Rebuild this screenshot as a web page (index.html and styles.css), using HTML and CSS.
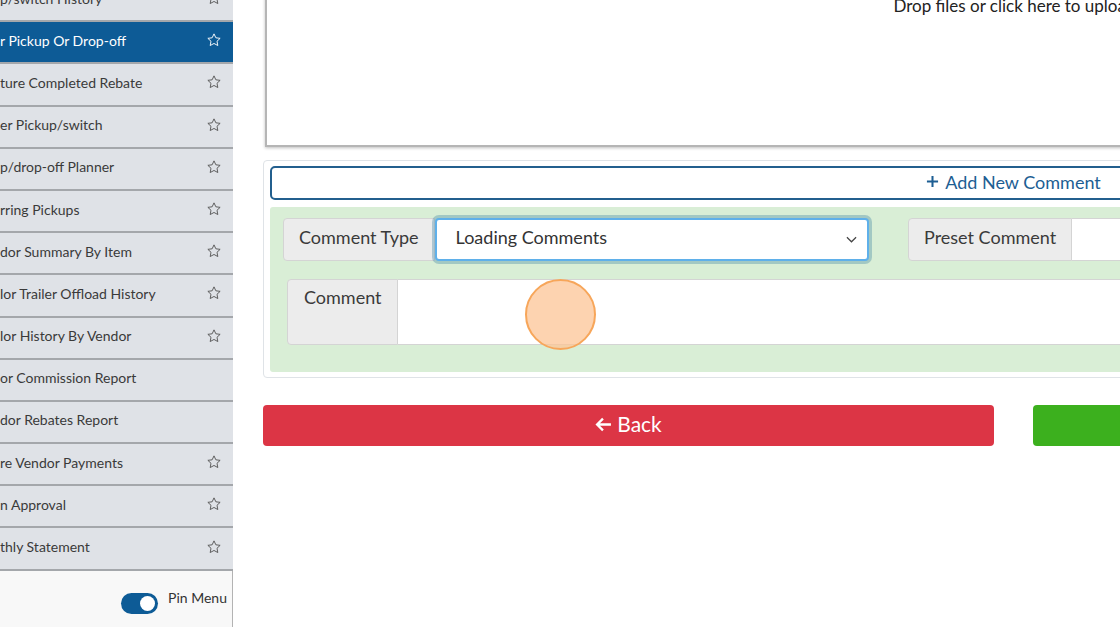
FILE: index.html
```html
<!DOCTYPE html>
<html lang="en">
<head>
    <meta charset="UTF-8">
    <meta name="viewport" content="width=device-width, initial-scale=1.0">
    <title>Vendor Pickup Or Drop-off</title>
    <link rel="stylesheet" href="styles.css">
</head>
<body>

<div class="layout">

    <!-- Side menu (scrolled, left part cut off) -->
    <aside class="sidebar">
        <ul class="menu">
            <li class="menu-item"><span>p/switch History</span><svg class="star" viewBox="0 0 24 24"><path d="M12 2.8l2.8 5.9 6.4.8-4.7 4.4 1.2 6.4L12 17.2l-5.7 3.1 1.2-6.4-4.7-4.4 6.4-.8z"/></svg></li>
            <li class="menu-item active"><span>r Pickup Or Drop-off</span><svg class="star" viewBox="0 0 24 24"><path d="M12 2.8l2.8 5.9 6.4.8-4.7 4.4 1.2 6.4L12 17.2l-5.7 3.1 1.2-6.4-4.7-4.4 6.4-.8z"/></svg></li>
            <li class="menu-item"><span>ture Completed Rebate</span><svg class="star" viewBox="0 0 24 24"><path d="M12 2.8l2.8 5.9 6.4.8-4.7 4.4 1.2 6.4L12 17.2l-5.7 3.1 1.2-6.4-4.7-4.4 6.4-.8z"/></svg></li>
            <li class="menu-item"><span>er Pickup/switch</span><svg class="star" viewBox="0 0 24 24"><path d="M12 2.8l2.8 5.9 6.4.8-4.7 4.4 1.2 6.4L12 17.2l-5.7 3.1 1.2-6.4-4.7-4.4 6.4-.8z"/></svg></li>
            <li class="menu-item"><span>p/drop-off Planner</span><svg class="star" viewBox="0 0 24 24"><path d="M12 2.8l2.8 5.9 6.4.8-4.7 4.4 1.2 6.4L12 17.2l-5.7 3.1 1.2-6.4-4.7-4.4 6.4-.8z"/></svg></li>
            <li class="menu-item"><span>rring Pickups</span><svg class="star" viewBox="0 0 24 24"><path d="M12 2.8l2.8 5.9 6.4.8-4.7 4.4 1.2 6.4L12 17.2l-5.7 3.1 1.2-6.4-4.7-4.4 6.4-.8z"/></svg></li>
            <li class="menu-item"><span>dor Summary By Item</span><svg class="star" viewBox="0 0 24 24"><path d="M12 2.8l2.8 5.9 6.4.8-4.7 4.4 1.2 6.4L12 17.2l-5.7 3.1 1.2-6.4-4.7-4.4 6.4-.8z"/></svg></li>
            <li class="menu-item"><span>lor Trailer Offload History</span><svg class="star" viewBox="0 0 24 24"><path d="M12 2.8l2.8 5.9 6.4.8-4.7 4.4 1.2 6.4L12 17.2l-5.7 3.1 1.2-6.4-4.7-4.4 6.4-.8z"/></svg></li>
            <li class="menu-item"><span>lor History By Vendor</span><svg class="star" viewBox="0 0 24 24"><path d="M12 2.8l2.8 5.9 6.4.8-4.7 4.4 1.2 6.4L12 17.2l-5.7 3.1 1.2-6.4-4.7-4.4 6.4-.8z"/></svg></li>
            <li class="menu-item"><span>or Commission Report</span></li>
            <li class="menu-item"><span>dor Rebates Report</span></li>
            <li class="menu-item"><span>re Vendor Payments</span><svg class="star" viewBox="0 0 24 24"><path d="M12 2.8l2.8 5.9 6.4.8-4.7 4.4 1.2 6.4L12 17.2l-5.7 3.1 1.2-6.4-4.7-4.4 6.4-.8z"/></svg></li>
            <li class="menu-item"><span>n Approval</span><svg class="star" viewBox="0 0 24 24"><path d="M12 2.8l2.8 5.9 6.4.8-4.7 4.4 1.2 6.4L12 17.2l-5.7 3.1 1.2-6.4-4.7-4.4 6.4-.8z"/></svg></li>
            <li class="menu-item"><span>thly Statement</span><svg class="star" viewBox="0 0 24 24"><path d="M12 2.8l2.8 5.9 6.4.8-4.7 4.4 1.2 6.4L12 17.2l-5.7 3.1 1.2-6.4-4.7-4.4 6.4-.8z"/></svg></li>
        </ul>
        <div class="pin">
            <span class="toggle"></span>
            <span class="pin-label">Pin Menu</span>
        </div>
    </aside>

    <main class="content">
        <div class="dropzone">Drop files or click here to upload</div>

        <!-- Comments -->
        <section class="comments">
            <button class="add-comment">
                <svg class="plus" viewBox="0 0 14 14"><path d="M7 1v12M1 7h12"/></svg>
                Add New Comment
            </button>
            <div class="comment-form">
                <div class="form-row">
                    <div class="input-group">
                        <span class="addon">Comment Type</span>
                        <div class="select">
                            <span>Loading Comments</span>
                            <svg class="chevron" viewBox="0 0 12 7"><path d="M1 1l5 5 5-5"/></svg>
                        </div>
                    </div>
                    <div class="input-group">
                        <span class="addon">Preset Comment</span>
                        <div class="field"></div>
                    </div>
                </div>
                <div class="input-group comment-group">
                    <span class="addon">Comment</span>
                    <div class="field"></div>
                </div>
            </div>
        </section>

        <div class="actions">
            <button class="btn btn-back">
                <svg class="arrow" viewBox="0 0 16 14"><path d="M15 7H2M7.5 1.5L2 7l5.5 5.5"/></svg>
                Back
            </button>
            <button class="btn btn-save">Save</button>
        </div>
    </main>

</div>

<!-- click indicator -->
<div class="click-marker"></div>

</body>
</html>
```

FILE: styles.css
```css
body {
    margin: 0;
    overflow: hidden;
    font-family: Lato, "Open Sans", sans-serif;
    background-color: #fff;
    color: #333;
}

.layout {
    display: flex;
    width: 1800px;
    height: 627px;
}

/* Side menu */
.sidebar {
    width: 233px;
    flex: none;
    display: flex;
    flex-direction: column;
    overflow: hidden;
}

.menu {
    list-style: none;
    margin: -20px 0 0;
    padding: 0;
    background-color: #dfe2e7;
}

.menu-item {
    box-sizing: border-box;
    height: 42.2px;
    border-bottom: 2px solid #a4a7ab;
    display: flex;
    align-items: center;
    justify-content: space-between;
    padding: 0 11px 4px 0;
    font-size: 14px;
    color: #3a3a3a;
    white-space: nowrap;
}

.menu-item.active {
    background-color: #0d5b96;
    color: #fff;
}

.star {
    width: 16px;
    height: 16px;
    fill: none;
    stroke: #555;
    stroke-width: 1.4;
    stroke-linejoin: round;
}

.menu-item.active .star {
    stroke: #fff;
}

.pin {
    flex: 1;
    background-color: #f8f8f8;
    border-right: 1px solid #b3b3b3;
    display: flex;
    justify-content: flex-end;
    align-items: flex-start;
    gap: 10px;
    padding: 22px 5px 0 0;
}

.toggle {
    position: relative;
    width: 37px;
    height: 21px;
    border-radius: 11px;
    background-color: #0d5b96;
}

.toggle::after {
    content: "";
    position: absolute;
    top: 3px;
    right: 3px;
    width: 15px;
    height: 15px;
    border-radius: 50%;
    background-color: #fff;
}

.pin-label {
    font-size: 14px;
    line-height: 14px;
    margin-top: -2px;
}

/* Main column */
.content {
    flex: none;
    width: 1501px;
    padding-left: 30px;
}

.dropzone {
    box-sizing: border-box;
    margin: -40px 0 0 2px;
    height: 187px;
    border: 2px solid #b5b5b5;
    box-shadow: 0 1px 3px rgba(0, 0, 0, 0.25);
    padding-top: 33px;
    text-align: center;
    font-size: 17px;
    color: #222;
}

.comments {
    margin-top: 13px;
    border: 1px solid #dfe3e7;
    border-radius: 4px;
    padding: 5px 6px;
}

.add-comment {
    display: flex;
    align-items: center;
    justify-content: center;
    gap: 6px;
    width: 100%;
    height: 34px;
    border: 2px solid #235f8e;
    border-radius: 5px;
    background-color: #fff;
    color: #1d5e93;
    font-family: inherit;
    font-size: 18px;
    padding: 0 0 3px;
}

.plus {
    width: 13px;
    height: 13px;
    stroke: #1d5e93;
    stroke-width: 2.2;
    fill: none;
}

.comment-form {
    margin-top: 7px;
    background-color: #d9eed6;
    border-radius: 3px;
    padding: 11px 13px 27px;
}

.form-row {
    display: flex;
    gap: 39px;
}

.form-row .input-group {
    flex: 0 0 586px;
}

.input-group {
    display: flex;
    height: 43px;
}

.addon {
    display: flex;
    align-items: center;
    padding: 0 15px 5px;
    background-color: #ececec;
    border: 1px solid #d4d4d4;
    border-radius: 4px 0 0 4px;
    font-size: 18px;
    color: #3a3a3a;
    white-space: nowrap;
}

.select {
    flex: 1;
    display: flex;
    align-items: center;
    justify-content: space-between;
    padding: 0 10px 5px 19px;
    background-color: #fff;
    border: 2px solid #5fb0ea;
    border-radius: 4px;
    box-shadow: 0 0 0 3px rgba(60, 130, 160, 0.35);
    font-size: 18px;
    color: #333;
}

.chevron {
    width: 11px;
    height: 7px;
    margin-top: 4px;
    fill: none;
    stroke: #444;
    stroke-width: 1.3;
}

.field {
    flex: 1;
    background-color: #fff;
    border: 1px solid #d4d4d4;
    border-left: none;
    border-radius: 0 4px 4px 0;
}

.comment-group {
    height: 66px;
    margin: 18px 4px 0;
}

.comment-group .addon {
    align-items: flex-start;
    padding: 6px 15px 0 16px;
}

/* Buttons */
.actions {
    display: flex;
    gap: 39px;
    margin-top: 27px;
}

.btn {
    flex: 1;
    height: 41px;
    border: none;
    border-radius: 4px;
    color: #fff;
    font-family: inherit;
    font-size: 21px;
    display: flex;
    align-items: center;
    justify-content: center;
    gap: 5px;
    padding: 0 0 5px;
}

.btn-back {
    background-color: #dc3545;
}

.btn-save {
    background-color: #3cb01e;
}

.arrow {
    width: 17px;
    height: 15px;
    margin-top: 3px;
    fill: none;
    stroke: #fff;
    stroke-width: 2.2;
}

.click-marker {
    position: absolute;
    left: 525px;
    top: 279px;
    width: 67px;
    height: 67px;
    border: 2px solid #f7a65a;
    border-radius: 50%;
    background-color: rgba(252, 196, 150, 0.75);
}
```
